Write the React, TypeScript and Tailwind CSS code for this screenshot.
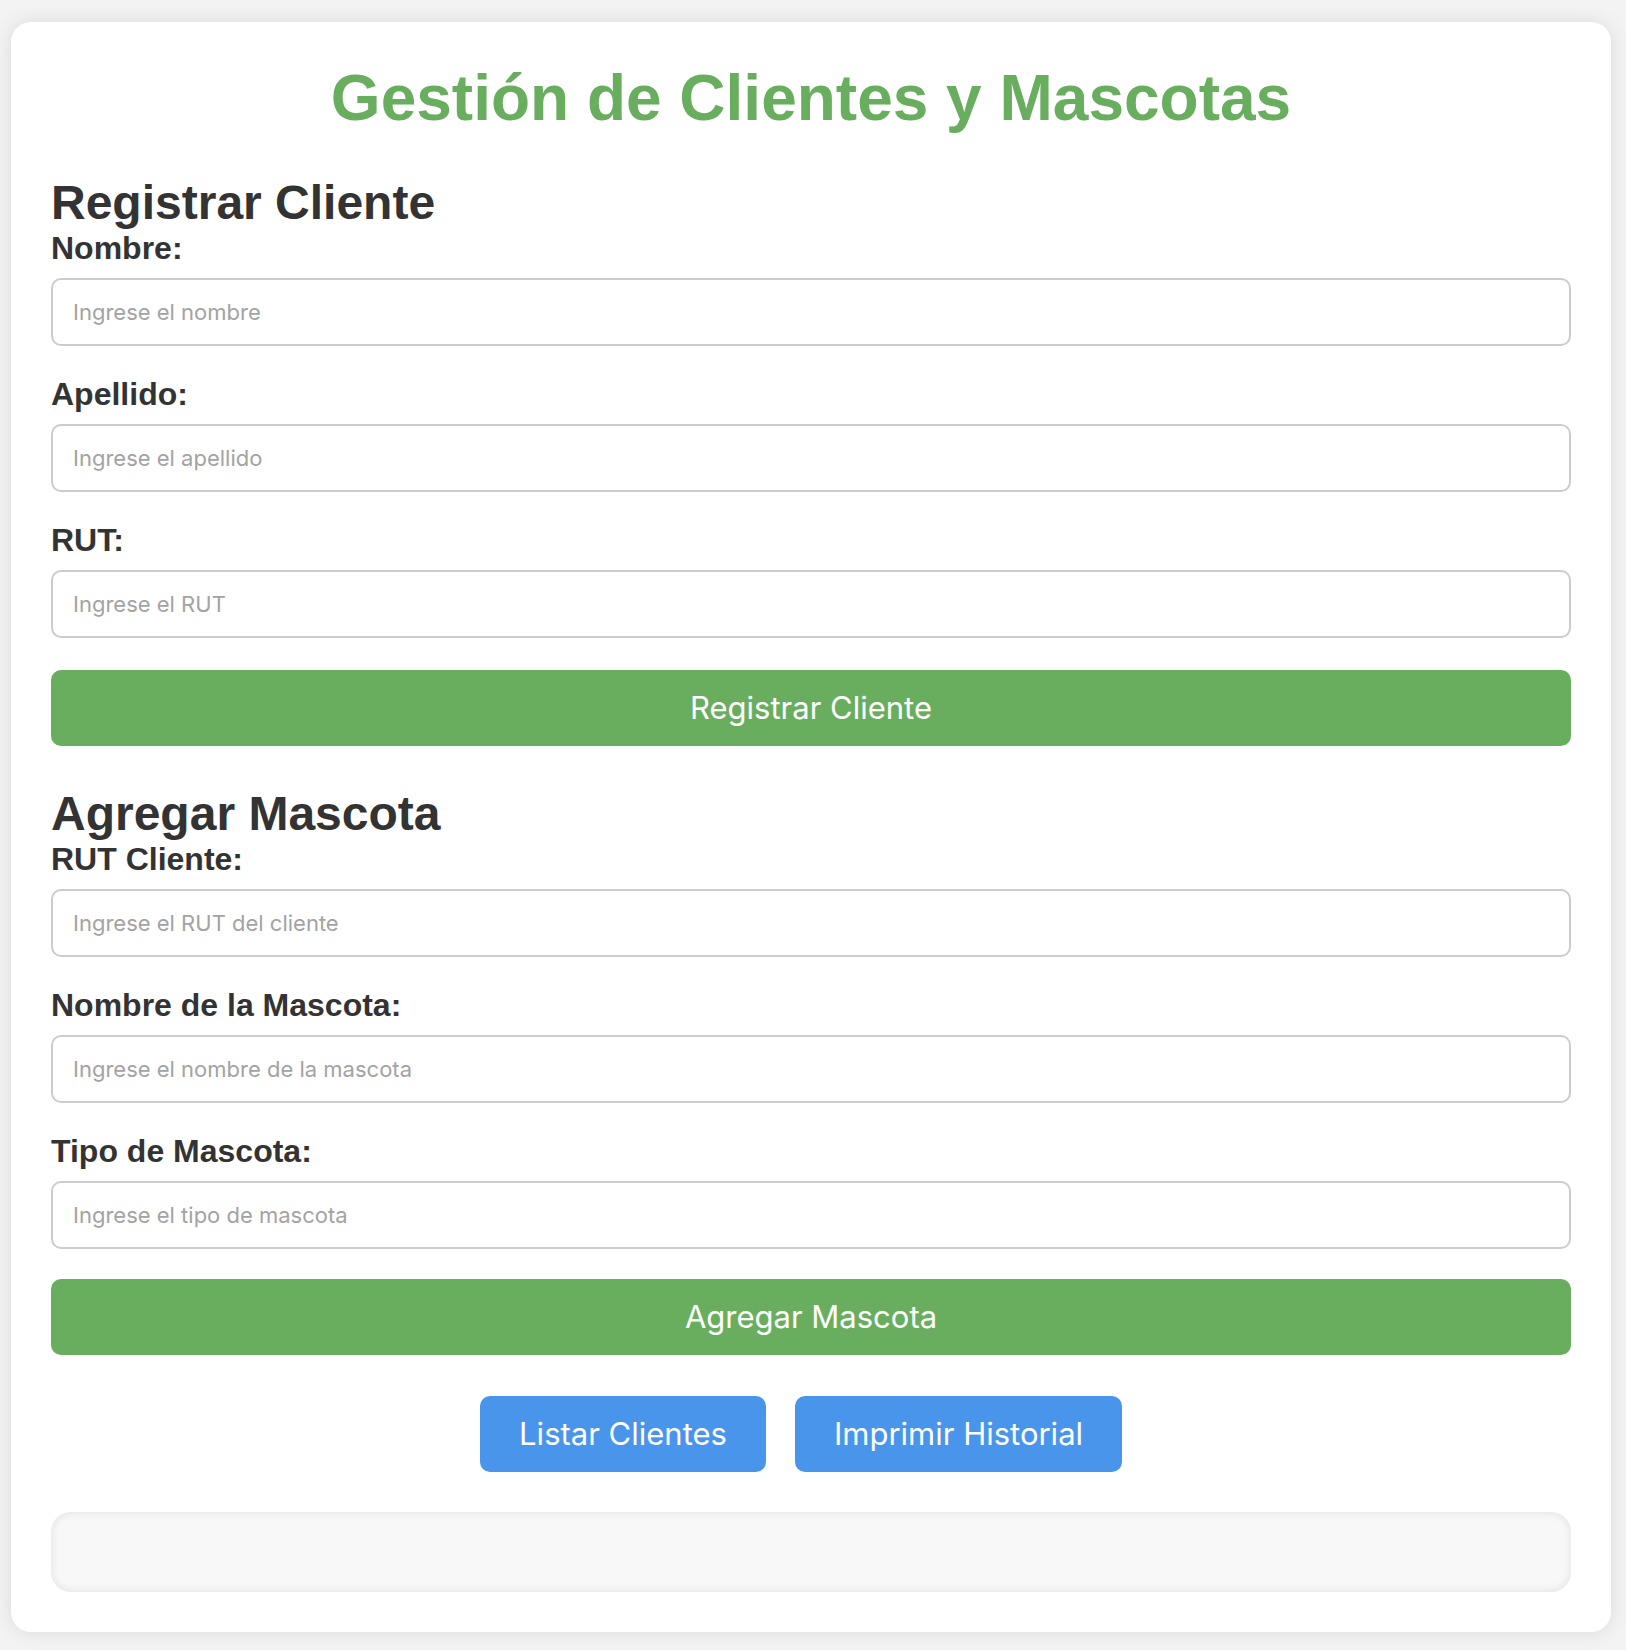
import React from "react";

const labelCls =
  "block text-[32px] leading-[36px] font-bold text-[#333333] mb-[12px]";
const inputCls =
  "block w-full h-[68px] border-2 border-[#cccccc] rounded-[10px] bg-white pl-5 text-[22px] text-[#333] placeholder:text-[#a3a3a3] outline-none mb-[30px]";
const inputFont = { fontFamily: "Inter, 'Noto Sans', sans-serif" } as React.CSSProperties;

function Field({ label, placeholder }: { label: string; placeholder: string }) {
  return (
    <div>
      <label className={labelCls}>{label}</label>
      <input className={inputCls} style={inputFont} placeholder={placeholder} />
    </div>
  );
}

export default function App() {
  return (
    <div
      className="min-h-[1650px] bg-[#f3f3f3] pt-[22px] pb-[18px]"
      style={{ fontFamily: "'Liberation Sans', Arial, sans-serif" }}
    >
      <div className="ml-[11px] w-[1600px] bg-white rounded-[20px] shadow-[0_0_20px_rgba(0,0,0,0.1)] p-[40px]">
        <h1 className="text-center text-[64px] leading-[72px] font-bold text-[#69ae5e] mb-[42px]">
          Gestión de Clientes y Mascotas
        </h1>

        <h2 className="text-[48px] leading-[54px] font-bold text-[#333333]">Registrar Cliente</h2>
        <Field label="Nombre:" placeholder="Ingrese el nombre" />
        <Field label="Apellido:" placeholder="Ingrese el apellido" />
        <div>
          <label className={labelCls}>RUT:</label>
          <input
            className="block w-full h-[68px] border-2 border-[#cccccc] rounded-[10px] bg-white pl-5 text-[22px] text-[#333] placeholder:text-[#a3a3a3] outline-none mb-[32px]"
            style={inputFont}
            placeholder="Ingrese el RUT"
          />
        </div>
        <button
          className="block w-full h-[76px] rounded-[10px] bg-[#69ae5e] text-white text-[31px]"
          style={inputFont}
        >
          Registrar Cliente
        </button>

        <h2 className="mt-[41px] text-[48px] leading-[54px] font-bold text-[#333333]">Agregar Mascota</h2>
        <Field label="RUT Cliente:" placeholder="Ingrese el RUT del cliente" />
        <Field label="Nombre de la Mascota:" placeholder="Ingrese el nombre de la mascota" />
        <div>
          <label className={labelCls}>Tipo de Mascota:</label>
          <input className={inputCls} style={inputFont} placeholder="Ingrese el tipo de mascota" />
        </div>
        <button
          className="block w-full h-[76px] rounded-[10px] bg-[#69ae5e] text-white text-[31px]"
          style={inputFont}
        >
          Agregar Mascota
        </button>

        <div className="mt-[41px] flex justify-center gap-[29px] pr-[20px]">
          <button
            className="w-[286px] h-[76px] rounded-[10px] bg-[#4a95ec] text-white text-[31px]"
            style={inputFont}
          >
            Listar Clientes
          </button>
          <button
            className="w-[327px] h-[76px] rounded-[10px] bg-[#4a95ec] text-white text-[31px]"
            style={inputFont}
          >
            Imprimir Historial
          </button>
        </div>

        <div className="mt-[40px] h-[80px] rounded-[20px] bg-[#f8f8f8] shadow-[inset_0_0_10px_rgba(0,0,0,0.1)]" />
      </div>
    </div>
  );
}
